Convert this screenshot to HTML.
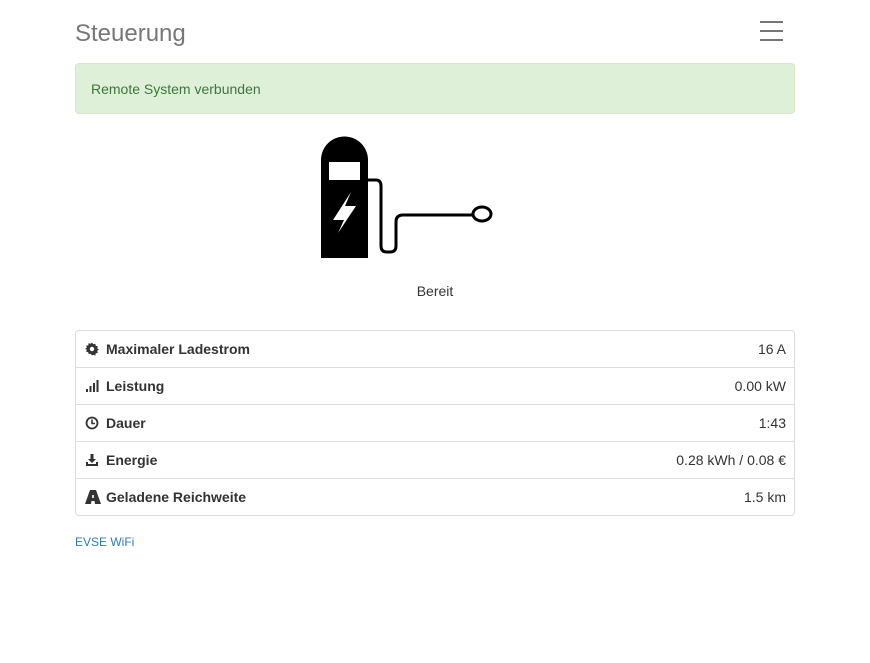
<!DOCTYPE html>
<html><head><meta charset="utf-8"><style>
body{margin:0;width:870px;height:663px;background:#fff;font-family:"Liberation Sans",sans-serif;font-size:14px;color:#333;position:relative;overflow:hidden}
h1{position:absolute;left:75px;top:20px;margin:0;font-size:24px;font-weight:normal;color:#777}
.hb{position:absolute;left:760px;width:23px;height:2px;background:#777}
.alert{position:absolute;left:75px;top:63px;width:718px;height:49px;background:#dff0d8;border:1px solid #d6e9c6;border-radius:4px;color:#3c763d;line-height:50px;box-sizing:content-box}
.alert span{padding-left:15px}
.st{position:absolute;left:0;width:870px;top:283px;text-align:center}
.tbl{position:absolute;left:75px;top:330px;width:718px;border:1px solid #ddd;border-radius:4px}
.row{height:36px;border-top:1px solid #ddd;line-height:37px;position:relative;padding-left:30px;font-weight:bold}
.row:first-child{border-top:none}
.row .v{position:absolute;right:8px;top:0;font-weight:normal}
.row svg{position:absolute;left:9px;top:11px}
.ft{position:absolute;left:75px;top:535px;font-size:12px;color:#337ab7}
</style></head><body>
<h1>Steuerung</h1>
<div class="hb" style="top:21px"></div><div class="hb" style="top:30px"></div><div class="hb" style="top:39px"></div>
<div class="alert"><span>Remote System verbunden</span></div>
<svg style="position:absolute;left:300px;top:125px" width="210" height="145" viewBox="0 0 210 145">
<path d="M21 133V35a23.5 23.5 0 0 1 47 0v98z" fill="#000"/>
<rect x="29" y="37" width="31" height="18" fill="#fff"/>
<path d="M51 67L33 95H44L38 108L56 81H45L51 67z" fill="#fff"/>
<path d="M68 55h8q5 0 5 6v60q0 6 6 6h3q6 0 6-6v-24q0-7 7-7h69" fill="none" stroke="#000" stroke-width="3"/>
<ellipse cx="182" cy="89" rx="9" ry="7" fill="none" stroke="#000" stroke-width="3"/>
</svg>
<div class="st">Bereit</div>
<div class="tbl">
<div class="row"><svg width="14" height="14" viewBox="0 0 14 14"><path d="M7 0.5l1.2 1.8 2.1-.6.4 2.1 2.1.5-.6 2.1 1.8 1.2-1.8 1.2.6 2.1-2.1.5-.4 2.1-2.1-.6L7 13.5l-1.2-1.8-2.1.6-.4-2.1-2.1-.5.6-2.1L0 7l1.8-1.2-.6-2.1 2.1-.5.4-2.1 2.1.6z" fill="#333"/><circle cx="7" cy="7" r="2.2" fill="#fff"/></svg>Maximaler Ladestrom<span class="v">16 A</span></div>
<div class="row"><svg width="14" height="14" viewBox="0 0 14 14"><rect x="1" y="10" width="2" height="3" fill="#333"/><rect x="4.5" y="7" width="2" height="6" fill="#333"/><rect x="8" y="4" width="2" height="9" fill="#333"/><rect x="11.5" y="1" width="2" height="12" fill="#333"/></svg>Leistung<span class="v">0.00 kW</span></div>
<div class="row"><svg width="14" height="14" viewBox="0 0 14 14"><circle cx="7" cy="7" r="5.5" fill="none" stroke="#333" stroke-width="1.8"/><path d="M7 3.5V7.5h3" fill="none" stroke="#333" stroke-width="1.6"/></svg>Dauer<span class="v">1:43</span></div>
<div class="row"><svg width="14" height="14" viewBox="0 0 14 14"><path d="M5.5 1h3v5h2.5L7 10 3 6h2.5z M1 9v4h12V9h-2v2H3V9z" fill="#333"/></svg>Energie<span class="v">0.28 kWh / 0.08 €</span></div>
<div class="row"><svg width="16" height="14" viewBox="0 0 16 14"><path d="M5 0h6l5 14h-6l-.5-3h-3L6 14H0z" fill="#333"/><rect x="7.2" y="5" width="1.6" height="3" fill="#fff"/></svg>Geladene Reichweite<span class="v">1.5 km</span></div>
</div>
<div class="ft">EVSE WiFi</div>
</body></html>
